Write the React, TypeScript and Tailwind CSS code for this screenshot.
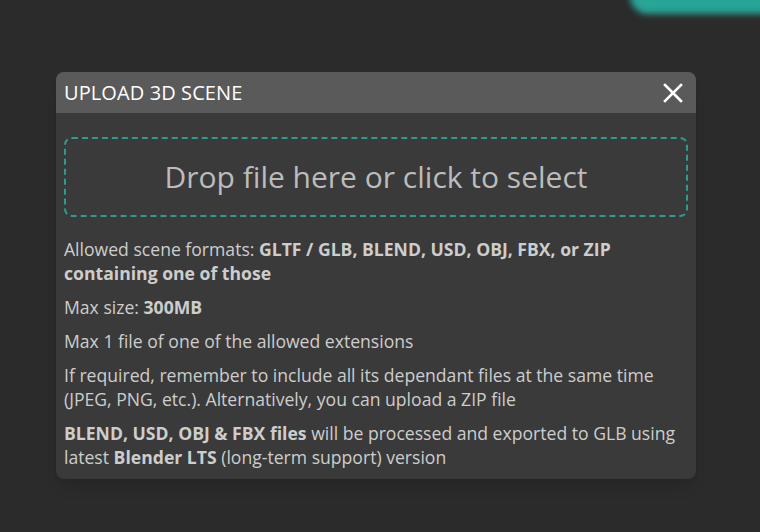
import React from 'react';

const UploadSceneDialog: React.FC = () => {
  return (
    <div className="w-[640px] rounded-lg bg-[#3a3a3a] overflow-hidden shadow-lg">
      <div className="flex items-center justify-between h-[41px] bg-[#5a5a5a] pl-2 pr-[13px]">
        <span className="text-[20px] font-medium text-white tracking-[0.1px]">UPLOAD 3D SCENE</span>
        <button className="text-white">
          <svg width="20" height="20" viewBox="0 0 20 20" fill="none" stroke="currentColor" strokeWidth="2.6" strokeLinecap="square">
            <path d="M2 2 L18 18 M18 2 L2 18" />
          </svg>
        </button>
      </div>

      <div className="px-2 pt-6 pb-[10px] text-[17.6px] leading-6 text-[#cdcdcd]">
        <div className="flex items-center justify-center h-[80px] rounded-lg border-2 border-dashed border-[#2a9d90] cursor-pointer">
          <span className="text-[30px] text-[#bcbcbc]">Drop file here or click to select</span>
        </div>

        <div className="mt-5 flex flex-col gap-[10px]">
          <p>
            Allowed scene formats: <b className="font-bold">GLTF / GLB, BLEND, USD, OBJ, FBX, or ZIP containing one of those</b>
          </p>
          <p>
            Max size: <b className="font-bold">300MB</b>
          </p>
          <p>Max 1 file of one of the allowed extensions</p>
          <p>
            If required, remember to include all its dependant files at the same time (JPEG, PNG, etc.). Alternatively, you can upload a ZIP file
          </p>
          <p>
            <b className="font-bold">BLEND, USD, OBJ &amp; FBX files</b> will be processed and exported to GLB using latest{' '}
            <b className="font-bold">Blender LTS</b> (long-term support) version
          </p>
        </div>
      </div>
    </div>
  );
};

export default function App() {
  return (
    <div className="relative w-[760px] h-[532px] overflow-hidden bg-[#2b2b2b] font-['Open_Sans',sans-serif]">
      <div className="absolute -top-[22px] -right-[30px] w-[160px] h-[36px] rounded-full bg-[#27a596] blur-[3px]" />
      <div className="pt-[72px] pl-[56px]">
        <UploadSceneDialog />
      </div>
    </div>
  );
}
